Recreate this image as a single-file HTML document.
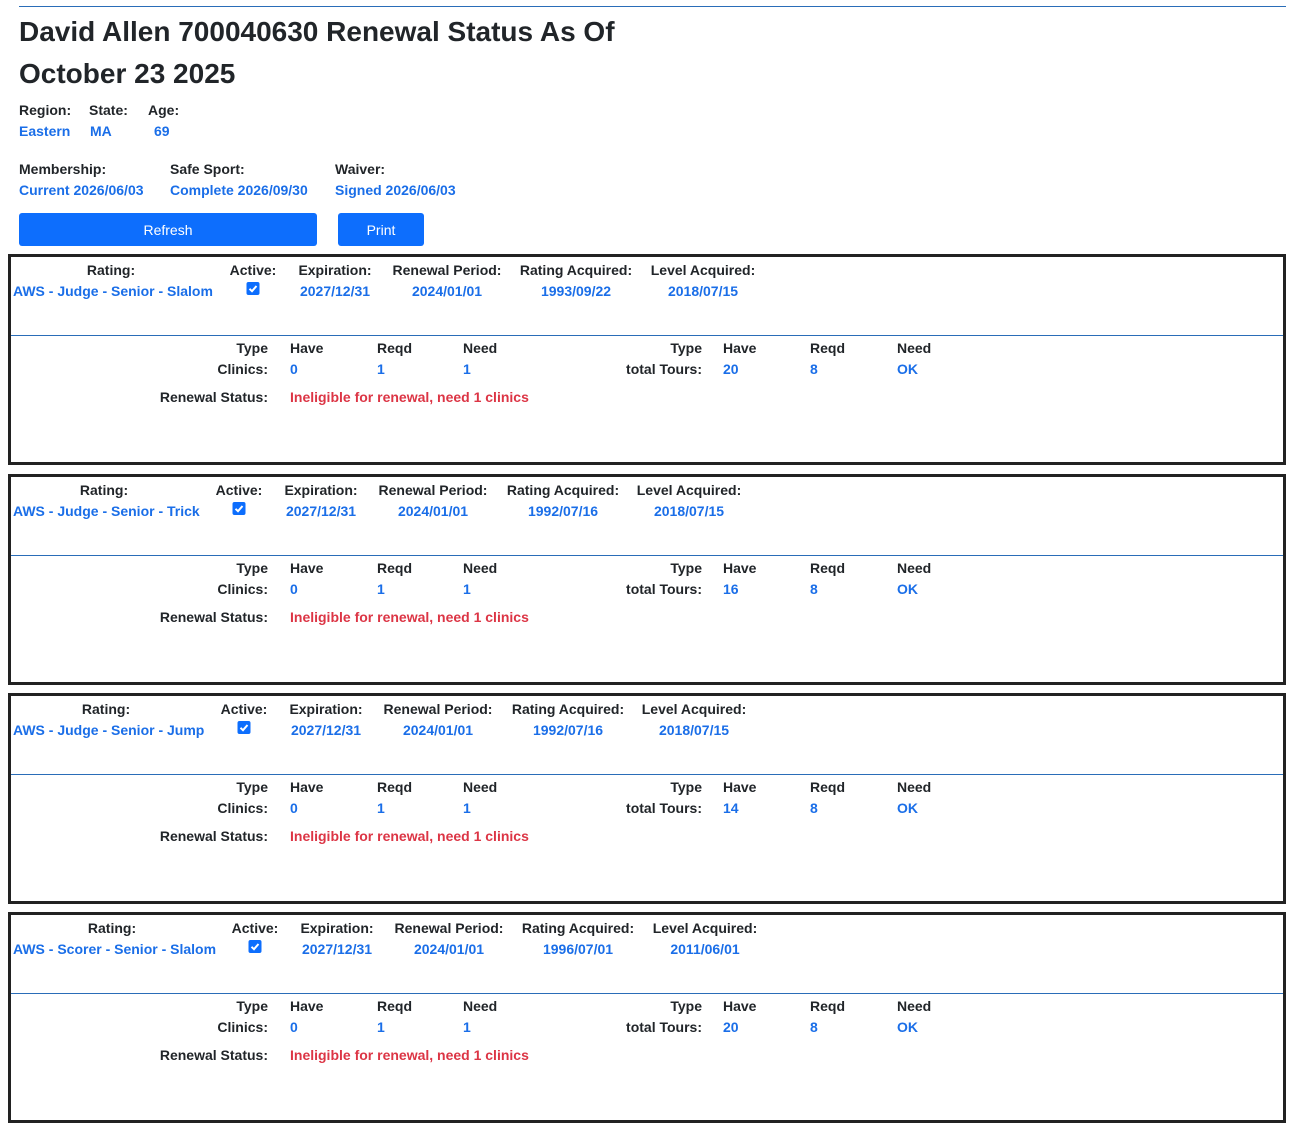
<!DOCTYPE html>
<html><head><meta charset="utf-8">
<style>
*{margin:0;padding:0;box-sizing:border-box}
body{width:1291px;height:1123px;background:#fff;font-family:"Liberation Sans",Arial,sans-serif;color:#212529;position:relative;overflow:hidden;font-weight:bold;font-size:14px;letter-spacing:0}
.a{position:absolute;white-space:nowrap;line-height:18px}
.c{transform:translateX(-50%)}
.b{color:#1a6ee8}
.r{color:#dc3545}
.box{position:absolute;left:8px;width:1278px;height:211px;border:3px solid #222}
.ln{position:absolute;left:0;right:0;top:78px;height:1px;background:#2a6db8}
.cb{position:absolute;width:13px;height:13px;background:#0d6efd;border-radius:2px;top:25px;transform:translateX(-50%)}
.cb svg{position:absolute;left:0;top:0}
.btn{position:absolute;top:213px;height:33px;background:#0d6efd;color:#fff;border-radius:3px;font-weight:normal;font-size:14px;text-align:center;line-height:34px}
h1{position:absolute;left:19px;font-size:28px;font-weight:bold;white-space:nowrap;color:#212529;letter-spacing:0}
</style></head><body>
<div style="position:absolute;left:19px;top:6px;width:1267px;height:1px;background:#2a6db8"></div>
<h1 style="top:16px">David Allen 700040630 Renewal Status As Of</h1>
<h1 style="top:58px">October 23 2025</h1>
<div class="a" style="left:19px;top:101px">Region:</div>
<div class="a" style="left:89px;top:101px">State:</div>
<div class="a" style="left:148px;top:101px">Age:</div>
<div class="a b" style="left:19px;top:122px">Eastern</div>
<div class="a b" style="left:90px;top:122px">MA</div>
<div class="a b" style="left:154px;top:122px">69</div>
<div class="a" style="left:19px;top:160px">Membership:</div>
<div class="a" style="left:170px;top:160px">Safe Sport:</div>
<div class="a" style="left:335px;top:160px">Waiver:</div>
<div class="a b" style="left:19px;top:181px">Current 2026/06/03</div>
<div class="a b" style="left:170px;top:181px">Complete 2026/09/30</div>
<div class="a b" style="left:335px;top:181px">Signed 2026/06/03</div>
<div class="btn" style="left:19px;width:298px">Refresh</div>
<div class="btn" style="left:338px;width:86px">Print</div>

<!-- Box 1 -->
<div class="box" style="top:254px">
<div class="a c" style="left:100px;top:4px">Rating:</div>
<div class="a c" style="left:242px;top:4px">Active:</div>
<div class="a c" style="left:324px;top:4px">Expiration:</div>
<div class="a c" style="left:436px;top:4px">Renewal Period:</div>
<div class="a c" style="left:565px;top:4px">Rating Acquired:</div>
<div class="a c" style="left:692px;top:4px">Level Acquired:</div>
<div class="a b" style="left:2px;top:25px">AWS - Judge - Senior - Slalom</div>
<div class="cb" style="left:242px"><svg width="13" height="13"><path d="M3 6.8 L5.5 9.2 L10 4" stroke="#fff" stroke-width="2" fill="none"/></svg></div>
<div class="a c b" style="left:324px;top:25px">2027/12/31</div>
<div class="a c b" style="left:436px;top:25px">2024/01/01</div>
<div class="a c b" style="left:565px;top:25px">1993/09/22</div>
<div class="a c b" style="left:692px;top:25px">2018/07/15</div>
<div class="ln"></div>
<div class="a" style="right:1015px;top:82px">Type</div><div class="a" style="left:279px;top:82px">Have</div><div class="a" style="left:366px;top:82px">Reqd</div><div class="a" style="left:452px;top:82px">Need</div>
<div class="a" style="right:581px;top:82px">Type</div><div class="a" style="left:712px;top:82px">Have</div><div class="a" style="left:799px;top:82px">Reqd</div><div class="a" style="left:886px;top:82px">Need</div>
<div class="a" style="right:1015px;top:103px">Clinics:</div><div class="a b" style="left:279px;top:103px">0</div><div class="a b" style="left:366px;top:103px">1</div><div class="a b" style="left:452px;top:103px">1</div>
<div class="a" style="right:581px;top:103px">total Tours:</div><div class="a b" style="left:712px;top:103px">20</div><div class="a b" style="left:799px;top:103px">8</div><div class="a b" style="left:886px;top:103px">OK</div>
<div class="a" style="right:1015px;top:131px">Renewal Status:</div><div class="a r" style="left:279px;top:131px">Ineligible for renewal, need 1 clinics</div>
</div>

<!-- Box 2 -->
<div class="box" style="top:474px">
<div class="a c" style="left:93px;top:4px">Rating:</div>
<div class="a c" style="left:228px;top:4px">Active:</div>
<div class="a c" style="left:310px;top:4px">Expiration:</div>
<div class="a c" style="left:422px;top:4px">Renewal Period:</div>
<div class="a c" style="left:552px;top:4px">Rating Acquired:</div>
<div class="a c" style="left:678px;top:4px">Level Acquired:</div>
<div class="a b" style="left:2px;top:25px">AWS - Judge - Senior - Trick</div>
<div class="cb" style="left:228px"><svg width="13" height="13"><path d="M3 6.8 L5.5 9.2 L10 4" stroke="#fff" stroke-width="2" fill="none"/></svg></div>
<div class="a c b" style="left:310px;top:25px">2027/12/31</div>
<div class="a c b" style="left:422px;top:25px">2024/01/01</div>
<div class="a c b" style="left:552px;top:25px">1992/07/16</div>
<div class="a c b" style="left:678px;top:25px">2018/07/15</div>
<div class="ln"></div>
<div class="a" style="right:1015px;top:82px">Type</div><div class="a" style="left:279px;top:82px">Have</div><div class="a" style="left:366px;top:82px">Reqd</div><div class="a" style="left:452px;top:82px">Need</div>
<div class="a" style="right:581px;top:82px">Type</div><div class="a" style="left:712px;top:82px">Have</div><div class="a" style="left:799px;top:82px">Reqd</div><div class="a" style="left:886px;top:82px">Need</div>
<div class="a" style="right:1015px;top:103px">Clinics:</div><div class="a b" style="left:279px;top:103px">0</div><div class="a b" style="left:366px;top:103px">1</div><div class="a b" style="left:452px;top:103px">1</div>
<div class="a" style="right:581px;top:103px">total Tours:</div><div class="a b" style="left:712px;top:103px">16</div><div class="a b" style="left:799px;top:103px">8</div><div class="a b" style="left:886px;top:103px">OK</div>
<div class="a" style="right:1015px;top:131px">Renewal Status:</div><div class="a r" style="left:279px;top:131px">Ineligible for renewal, need 1 clinics</div>
</div>

<!-- Box 3 -->
<div class="box" style="top:693px">
<div class="a c" style="left:95px;top:4px">Rating:</div>
<div class="a c" style="left:233px;top:4px">Active:</div>
<div class="a c" style="left:315px;top:4px">Expiration:</div>
<div class="a c" style="left:427px;top:4px">Renewal Period:</div>
<div class="a c" style="left:557px;top:4px">Rating Acquired:</div>
<div class="a c" style="left:683px;top:4px">Level Acquired:</div>
<div class="a b" style="left:2px;top:25px">AWS - Judge - Senior - Jump</div>
<div class="cb" style="left:233px"><svg width="13" height="13"><path d="M3 6.8 L5.5 9.2 L10 4" stroke="#fff" stroke-width="2" fill="none"/></svg></div>
<div class="a c b" style="left:315px;top:25px">2027/12/31</div>
<div class="a c b" style="left:427px;top:25px">2024/01/01</div>
<div class="a c b" style="left:557px;top:25px">1992/07/16</div>
<div class="a c b" style="left:683px;top:25px">2018/07/15</div>
<div class="ln"></div>
<div class="a" style="right:1015px;top:82px">Type</div><div class="a" style="left:279px;top:82px">Have</div><div class="a" style="left:366px;top:82px">Reqd</div><div class="a" style="left:452px;top:82px">Need</div>
<div class="a" style="right:581px;top:82px">Type</div><div class="a" style="left:712px;top:82px">Have</div><div class="a" style="left:799px;top:82px">Reqd</div><div class="a" style="left:886px;top:82px">Need</div>
<div class="a" style="right:1015px;top:103px">Clinics:</div><div class="a b" style="left:279px;top:103px">0</div><div class="a b" style="left:366px;top:103px">1</div><div class="a b" style="left:452px;top:103px">1</div>
<div class="a" style="right:581px;top:103px">total Tours:</div><div class="a b" style="left:712px;top:103px">14</div><div class="a b" style="left:799px;top:103px">8</div><div class="a b" style="left:886px;top:103px">OK</div>
<div class="a" style="right:1015px;top:131px">Renewal Status:</div><div class="a r" style="left:279px;top:131px">Ineligible for renewal, need 1 clinics</div>
</div>

<!-- Box 4 -->
<div class="box" style="top:912px">
<div class="a c" style="left:101px;top:4px">Rating:</div>
<div class="a c" style="left:244px;top:4px">Active:</div>
<div class="a c" style="left:326px;top:4px">Expiration:</div>
<div class="a c" style="left:438px;top:4px">Renewal Period:</div>
<div class="a c" style="left:567px;top:4px">Rating Acquired:</div>
<div class="a c" style="left:694px;top:4px">Level Acquired:</div>
<div class="a b" style="left:2px;top:25px">AWS - Scorer - Senior - Slalom</div>
<div class="cb" style="left:244px"><svg width="13" height="13"><path d="M3 6.8 L5.5 9.2 L10 4" stroke="#fff" stroke-width="2" fill="none"/></svg></div>
<div class="a c b" style="left:326px;top:25px">2027/12/31</div>
<div class="a c b" style="left:438px;top:25px">2024/01/01</div>
<div class="a c b" style="left:567px;top:25px">1996/07/01</div>
<div class="a c b" style="left:694px;top:25px">2011/06/01</div>
<div class="ln"></div>
<div class="a" style="right:1015px;top:82px">Type</div><div class="a" style="left:279px;top:82px">Have</div><div class="a" style="left:366px;top:82px">Reqd</div><div class="a" style="left:452px;top:82px">Need</div>
<div class="a" style="right:581px;top:82px">Type</div><div class="a" style="left:712px;top:82px">Have</div><div class="a" style="left:799px;top:82px">Reqd</div><div class="a" style="left:886px;top:82px">Need</div>
<div class="a" style="right:1015px;top:103px">Clinics:</div><div class="a b" style="left:279px;top:103px">0</div><div class="a b" style="left:366px;top:103px">1</div><div class="a b" style="left:452px;top:103px">1</div>
<div class="a" style="right:581px;top:103px">total Tours:</div><div class="a b" style="left:712px;top:103px">20</div><div class="a b" style="left:799px;top:103px">8</div><div class="a b" style="left:886px;top:103px">OK</div>
<div class="a" style="right:1015px;top:131px">Renewal Status:</div><div class="a r" style="left:279px;top:131px">Ineligible for renewal, need 1 clinics</div>
</div>
</body></html>
